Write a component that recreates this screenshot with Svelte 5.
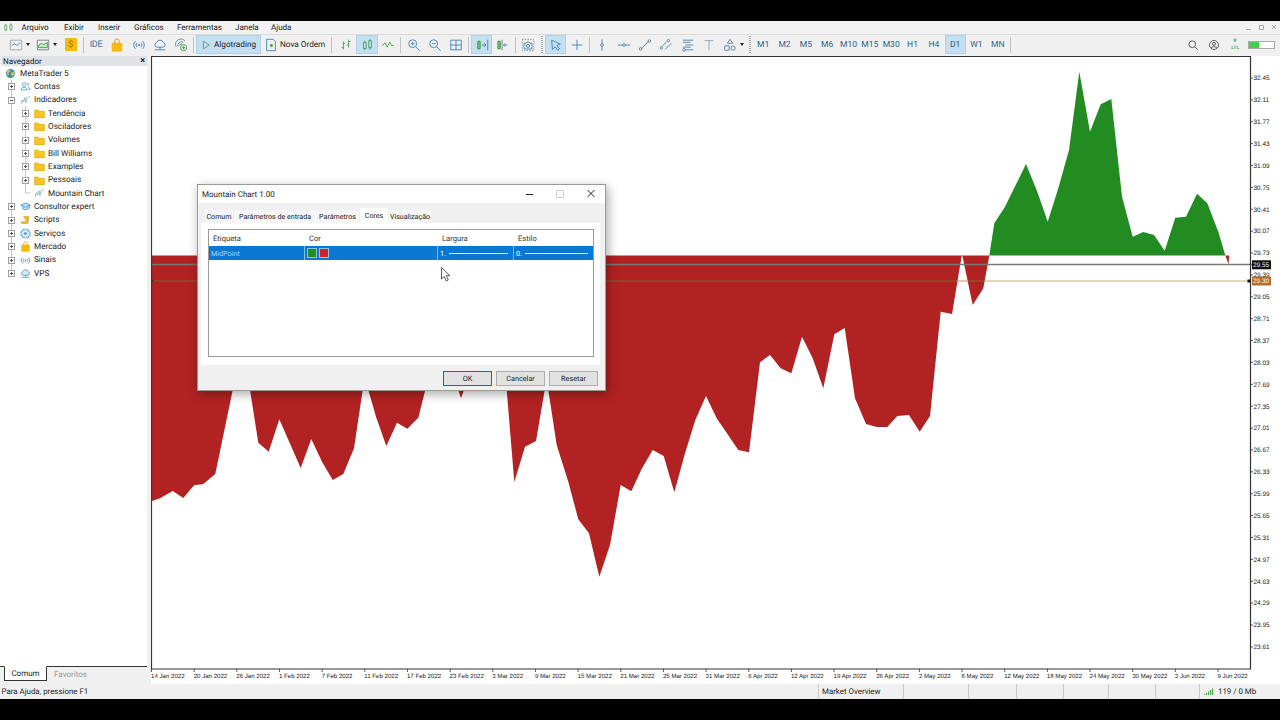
<script>
  const B = '#3d7fb5';
  const G = '#3f9d4a';
  const Y = '#f5b90f';

  // icon name -> list of paths on a 16x16 box
  const icons = {
    chartLine: [{ d: 'M1.5 2.5h13v11h-13z', s: '#9aa5ad' }, { d: 'M3 9l3-2.500 3 2 4-3.500', s: B }],
    chartArea: [{ d: 'M1.5 2.5h13v11h-13z', s: '#6f7a80' }, { d: 'M3 11V8l3-2 3 1.5 4-2.5V11z', s: G, f: '#c6e6c6' }],
    bag: [{ d: 'M2.5 6h11v9h-11z', f: Y, s: Y }, { d: 'M5.5 7V3.500a2.500 2.500 0 0 1 5 0V7', s: '#d69b00' }],
    signal: [{ d: 'M4 3.5a6 6 0 0 0 0 9M12 3.5a6 6 0 0 1 0 9M5.8 5.5a3.5 3.5 0 0 0 0 5M10.2 5.5a3.5 3.5 0 0 1 0 5', s: B }, { d: 'M7 7h2v2H7z', f: B }],
    cloud: [{ d: 'M4.5 10.5a2.7 2.7 0 0 1-.3-5.300 4 4 0 0 1 7.600 0 2.700 2.700 0 0 1-.3 5.300zM8 10.5V13M2 13.5h12', s: B }],
    ring: [{ d: 'M2.5 10a6 6 0 0 1 10-6.500M4.500 9.500a4 4 0 0 1 6-4.500M6.500 9a2 2 0 0 1 2.500-2', s: '#5b8a8c' }, { d: 'M14.5 11a3.5 3.5 0 1 1-7 0 3.500 3.500 0 0 1 7 0zM11 9v4M9 11h4', s: G }],
    play: [{ d: 'M4.5 3l8 5-8 5z', s: G }],
    order: [{ d: 'M3 1.5h7.500l2.500 2.500v10.500H3z', s: B }, { d: 'M7 7h3v3H7z', f: G }],
    bars: [{ d: 'M5 4v9M3 11h2M5 6h2M11 2v9M9 8h2M11 4h2', s: G }],
    candle: [{ d: 'M4 5h3v7H4zM5.5 3v2M5.5 12v2', s: G }, { d: 'M10 3h3v8h-3zM11.5 1.5V3M11.5 11v2.500', s: G }],
    lineChart: [{ d: 'M1.5 9l3-3.500 2.500 5 3-6 2 4h2.500', s: G }],
    zoomIn: [{ d: 'M11 6.5a4.5 4.5 0 1 1-9 0 4.500 4.500 0 0 1 9 0zM10 10l4.500 4.500M4.500 6.500h4M6.500 4.500v4', s: B }],
    zoomOut: [{ d: 'M11 6.5a4.5 4.5 0 1 1-9 0 4.500 4.500 0 0 1 9 0zM10 10l4.500 4.500M4.500 6.500h4', s: B }],
    grid: [{ d: 'M2 2.5h12v11H2zM8 2.5v11M2 8h12', s: B }],
    scrollEnd: [{ d: 'M3 4h3v8H3zM4.5 2.5v11', s: G, f: '#9ed09e' }, { d: 'M8 8h4M10.5 6l2 2-2 2', s: B }, { d: 'M14.5 2v12', s: '#777' }],
    shiftEnd: [{ d: 'M2 4h3v8H2zM3.5 2.5v11', s: G, f: '#9ed09e' }, { d: 'M13 8H9M10.5 6l-2 2 2 2', s: B }, { d: 'M7 2v12', s: '#777' }],
    camera: [{ d: 'M1.5 1.5h13M1.5 1.5v13h13v-13', s: '#888', dash: '1.5 1.5' }, { d: 'M3.5 6h2.5l1-1.500h2l1 1.500h2.500v6.500h-9z', s: B }, { d: 'M9.8 9a1.8 1.8 0 1 1-3.600 0 1.800 1.800 0 0 1 3.600 0z', s: B }],
    cursor: [{ d: 'M3 2.5l10 4.500-4 1.500 3 4-2 1.500-3-4-3 3z', s: B }],
    cross: [{ d: 'M8 2v12M2 8h12', s: B }],
    vline: [{ d: 'M8 1.5v13', s: B }, { d: 'M9.5 8a1.5 1.5 0 1 1-3 0 1.500 1.500 0 0 1 3 0z', s: B, f: '#fff' }],
    hline: [{ d: 'M1 8h14', s: B }, { d: 'M9.5 8a1.5 1.5 0 1 1-3 0 1.500 1.500 0 0 1 3 0z', s: B, f: '#fff' }],
    trend: [{ d: 'M4 12L12 4', s: B }, { d: 'M4.5 12.5a1.5 1.5 0 1 1-3 0 1.500 1.500 0 0 1 3 0zM14.500 3.500a1.500 1.500 0 1 1-3 0 1.500 1.500 0 0 1 3 0z', s: '#6a7b88' }],
    channel: [{ d: 'M3 10L9 4M7 13l7-7', s: B }, { d: 'M4 11.5a1.3 1.3 0 1 1-2.600 0 1.300 1.300 0 0 1 2.600 0zM12 3a1.300 1.300 0 1 1-2.600 0 1.300 1.300 0 0 1 2.600 0z', s: '#6a7b88' }],
    fibo: [{ d: 'M2 2.5h12M5 8h9M5 13.5h9', s: B }, { d: 'M2 5h9M2 10.5h9', s: '#6a7b88' }, { d: 'M5 13.5a1.5 1.5 0 1 1-3 0 1.500 1.500 0 0 1 3 0z', s: '#6a7b88' }],
    tool: [{ d: 'M3 3h10M8 3v11', s: '#7fa3bf' }],
    shapes: [{ d: 'M8 1.5l3 4.500H5zM2 9h5v5H2zM14 11.500a2.500 2.500 0 1 1-5 0 2.500 2.500 0 0 1 5 0z', s: '#5b7f94' }],
    search: [{ d: 'M11.5 7a4.5 4.5 0 1 1-9 0 4.500 4.500 0 0 1 9 0zM10.500 10.500l4 4', s: '#333' }],
    user: [{ d: 'M14 8A6 6 0 1 1 2 8a6 6 0 0 1 12 0z', s: '#333' }, { d: 'M10 6.5a2 2 0 1 1-4 0 2 2 0 0 1 4 0zM4.500 12c1-2.500 6-2.500 7 0', s: '#333' }],
    lvl: [{ d: 'M8 1l3 3-1.500 0V7h-3V4H5z', s: G, f: '#8fce8f' }],
    candleMenu: [{ d: 'M2.5 4.5h3v7h-3zM4 2.5v2M4 11.500v2M10 4h3v7h-3zM11.500 2v2M11.500 11v2', s: G }],
    globe: [{ d: 'M14.5 8a6.5 6.5 0 1 1-13 0 6.500 6.500 0 0 1 13 0z', f: '#2f8fd0' }, { d: 'M3 4l4-2 1 3-3 2 1 3-3 0zM9 7l4-2 1 4-3 3-2-2z', f: '#e9c21b' }, { d: 'M6 11l3 1-1 3-2-1z', f: '#49a84e' }],
    people: [{ d: 'M8.5 5a2.5 2.5 0 1 1-5 0 2.500 2.500 0 0 1 5 0zM1.500 13c0-5 9-5 9 0zM10 2.800a2.300 2.300 0 0 1 1 4.400M11 8.500c2 .3 3.500 1.800 3.500 4h-2.500', s: '#2f86c4' }],
    wave: [{ d: 'M1.5 13l2-6 1.500 3 2-6 1.500 7 2-8M12 2l2.500 1', s: '#5f9ea0' }],
    folder: [{ d: 'M1 3h5l1.500 2H15v9H1z', f: '#f7c625', s: '#d9a400' }],
    expert: [{ d: 'M1 6l7-3 7 3-7 3zM4 8v3.500c2 1.500 6 1.500 8 0V8', s: '#2f86c4', f: '#bfe0f5' }, { d: 'M14 6v5', s: '#2f86c4' }],
    script: [{ d: 'M5 2.5h8l-2 9.500H2.500c-1 0-1-2 .5-2h6', f: '#f2bd2a', s: '#c28e00' }],
    gear: [{ d: 'M8 1l1.5 2 2.500-.5.500 2.500 2.500 1-1 2.500 1 2.500-2.500 1-.5 2.500-2.500-.5L8 15l-1.500-1.500-2.500.5-.5-2.500-2.500-1 1-2.500-1-2.500 2.500-1 .5-2.500 2.500.5z', s: '#2f86c4', f: '#d6ecfa' }, { d: 'M6.5 5.5l4 2.500-4 2.500z', f: '#2f86c4' }],
    vps: [{ d: 'M4.5 10.5a2.7 2.7 0 0 1-.3-5.300 4 4 0 0 1 7.600 0 2.700 2.700 0 0 1-.3 5.300z', s: '#2f86c4', f: '#d6ecfa' }, { d: 'M8 10.5V13M2 13.5h12', s: '#2f86c4' }]
  };

  const menu = [
    ['Arquivo', 'm-arquivo'], ['Exibir', 'm-exibir'], ['Inserir', 'm-inserir'], ['Gráficos', 'm-graficos'],
    ['Ferramentas', 'm-ferr'], ['Janela', 'm-janela'], ['Ajuda', 'm-ajuda']
  ];

  const timeframes = ['M1', 'M2', 'M5', 'M6', 'M10', 'M15', 'M30', 'H1', 'H4', 'D1', 'W1', 'MN'];

  const tree = [
    { level: 0, icon: 'globe', label: 'MetaTrader 5' },
    { level: 1, icon: 'people', label: 'Contas', box: '+' },
    { level: 1, icon: 'wave', label: 'Indicadores', box: '-' },
    { level: 2, icon: 'folder', label: 'Tendência', box: '+' },
    { level: 2, icon: 'folder', label: 'Osciladores', box: '+' },
    { level: 2, icon: 'folder', label: 'Volumes', box: '+' },
    { level: 2, icon: 'folder', label: 'Bill Williams', box: '+' },
    { level: 2, icon: 'folder', label: 'Examples', box: '+' },
    { level: 2, icon: 'folder', label: 'Pessoais', box: '+' },
    { level: 2, icon: 'wave', label: 'Mountain Chart' },
    { level: 1, icon: 'expert', label: 'Consultor expert', box: '+' },
    { level: 1, icon: 'script', label: 'Scripts', box: '+' },
    { level: 1, icon: 'gear', label: 'Serviços', box: '+' },
    { level: 1, icon: 'bag', label: 'Mercado', box: '+' },
    { level: 1, icon: 'signal', label: 'Sinais', box: '+' },
    { level: 1, icon: 'vps', label: 'VPS', box: '+' }
  ];

  // traced from the chart, page coordinates
  const redArea = `152,255.5 152,501 160,498.3 172.7,491 183.3,498 194,485.3 203.3,484 215.3,474 232.7,390 241,372
    250,390 258.3,442.7 268.7,451.7 279.3,419.3 300.7,468 311.3,439 322,461.7 332.7,480 343.3,474 354,448.3
    362.7,390 365.5,370 368.3,390 376,416.7 386.3,446 397,422.7 407.3,428.7 418.3,417.7 425.3,390 440,380
    458.3,390 461,398.3 464,390 485,370 506.7,390 514.3,482 525,446.7 536,441 544.7,390 546.5,375 548.3,390
    556.7,445 568.3,481.7 578.3,519.3 589,533.3 599.3,576.7 610,545 620.7,485 631.3,491.3 642,468.3 652.7,450
    663.7,456 674.3,492.3 685,453.3 695.3,420 706,396 716.7,418.3 738.3,450 749,452.3 760,362.3 770,355 780.7,368.3
    791.3,373.3 802,336.7 812.7,358.3 823.3,388.3 834.3,334.3 844.7,328 855,398.3 866,424 876.7,427 887.3,427
    897.3,416 909,415 919.7,431.7 930,416 940.7,311.7 952,314 962,254 972.7,305 983.3,288.3 989.3,255.5`;

  const greenArea = `989.3,255.5 994.3,223.3 1005,206.7 1015.7,185 1026,164 1037.3,191.7 1047.7,221.7 1058.3,188.3
    1069,150 1079.3,71.7 1090,131.7 1100.7,104.3 1111.3,99 1122,196.7 1132.7,236.7 1143.3,232 1154,235 1164.7,250.7
    1175.3,217.7 1186,216.7 1197,193.7 1207.3,203.3 1218.3,231.7 1225.3,255.5`;

  const bidLine = [[152, 957.5, '#8a5a2c'], [957.5, 967.7, '#cfa77f'], [967.7, 984.6, '#8a5a2c'], [984.6, 1250, '#cfa77f']];

  const priceLabels = ['32.45', '32.11', '31.77', '31.43', '31.09', '30.75', '30.41', '30.07', '29.73', '29.39', '29.05', '28.71',
    '28.37', '28.03', '27.69', '27.35', '27.01', '26.67', '26.33', '25.99', '25.65', '25.31', '24.97', '24.63', '24.29', '23.95', '23.61'];
  const prices = priceLabels.map((label, i) => ({ label, y: 78 + i * 21.88 }));

  const dateLabels = ['14 Jan 2022', '20 Jan 2022', '26 Jan 2022', '1 Feb 2022', '7 Feb 2022', '11 Feb 2022', '17 Feb 2022', '23 Feb 2022',
    '3 Mar 2022', '9 Mar 2022', '15 Mar 2022', '21 Mar 2022', '25 Mar 2022', '31 Mar 2022', '6 Apr 2022', '12 Apr 2022', '19 Apr 2022',
    '26 Apr 2022', '2 May 2022', '6 May 2022', '12 May 2022', '18 May 2022', '24 May 2022', '30 May 2022', '3 Jun 2022', '9 Jun 2022'];
  const dates = dateLabels.map((label, i) => ({ label, x: 151 + i * 42.66 }));

  const statusCells = ['c1', 'c2', 'c3', 'c4', 'c5', 'c6'];
</script>

{#snippet icon(name, size = 14)}
  <svg class="ico" width={size} height={size} viewBox="0 0 16 16" fill="none">
    {#each icons[name] as p}
      <path d={p.d} stroke={p.s ?? 'none'} fill={p.f ?? 'none'} stroke-dasharray={p.dash} />
    {/each}
  </svg>
{/snippet}

{#snippet tool(name, active = false)}
  <span class="btn" class:active>{@render icon(name)}</span>
{/snippet}

{#snippet caret()}
  <span class="caret"></span>
{/snippet}

<div class="app">
  <div class="blackbar top"></div>

  <div class="menubar">
    <span class="menu-logo">{@render icon('candleMenu', 11)}</span>
    {#each menu as [label, cls]}
      <span class="menu-item {cls}">{label}</span>
    {/each}
    <svg class="winctl" width="30" height="7" viewBox="0 0 30 7" fill="none" stroke="#a8a8a8">
      <path d="M0 5.5h5M13.5 1.5h4v4h-4zM26 1l4 4M30 1l-4 4" />
    </svg>
  </div>

  <div class="toolbar">
    <span class="dd">{@render icon('chartLine')}{@render caret()}</span>
    <span class="dd">{@render icon('chartArea')}{@render caret()}</span>
    <span class="btn"><span class="coin">$</span></span>
    <span class="sep"></span>
    <span class="btn ide">IDE</span>
    {@render tool('bag')}
    {@render tool('signal')}
    {@render tool('cloud')}
    {@render tool('ring')}
    <span class="sep"></span>
    <span class="labelled algo">{@render icon('play', 12)}Algotrading</span>
    <span class="labelled order">{@render icon('order')}Nova Ordem</span>
    <span class="sep wide"></span>
    {@render tool('bars')}
    {@render tool('candle', true)}
    {@render tool('lineChart')}
    <span class="sep"></span>
    {@render tool('zoomIn')}
    {@render tool('zoomOut')}
    {@render tool('grid')}
    <span class="sep"></span>
    {@render tool('scrollEnd', true)}
    {@render tool('shiftEnd')}
    <span class="sep"></span>
    {@render tool('camera')}
    <span class="grip"></span>
    {@render tool('cursor', true)}
    {@render tool('cross')}
    <span class="sep"></span>
    {@render tool('vline')}
    {@render tool('hline')}
    {@render tool('trend')}
    {@render tool('channel')}
    {@render tool('fibo')}
    {@render tool('tool')}
    <span class="dd">{@render icon('shapes')}{@render caret()}</span>
    <span class="grip"></span>
    {#each timeframes as tf}
      <span class="btn tf" class:active={tf === 'D1'}>{tf}</span>
    {/each}
    <span class="sep"></span>
    <span class="spacer"></span>
    <span class="btn">{@render icon('search', 12)}</span>
    <span class="btn">{@render icon('user', 12)}</span>
    <span class="btn lvl">{@render icon('lvl', 8)}<span>LVL</span></span>
    <span class="meter"><span class="meter-fill"></span></span>
  </div>

  <div class="main">
    <aside class="navigator">
      <div class="nav-head"><span>Navegador</span><span class="nav-close">×</span></div>
      <div class="tree">
        <svg class="guides" width="40" height="210" viewBox="0 66 40 210">
          <path d="M11.5 80V273M25.5 106V193M11.5 86h4M11.5 99.5h4M25.5 193h5" stroke="#c4c4c4" fill="none" />
        </svg>
        {#each tree as row}
          <div class="row lvl{row.level}">
            {#if row.level > 0}
              <span class="slot">
                {#if row.box}
                  <svg width="7" height="7" viewBox="0 0 7 7" fill="none">
                    <rect x=".5" y=".5" width="6" height="6" fill="#fff" stroke="#a0a0a0" />
                    <path d={row.box === '+' ? 'M2 3.5h3M3.5 2v3' : 'M2 3.5h3'} stroke="#555" />
                  </svg>
                {/if}
              </span>
            {/if}
            <span class="slot">{@render icon(row.icon, 11)}</span>
            <span class="row-label">{row.label}</span>
          </div>
        {/each}
      </div>
      <div class="nav-tabs">
        <span class="nav-tab on">Comum</span>
        <span class="nav-tab">Favoritos</span>
      </div>
    </aside>

    <div class="chart">
      <svg class="plot" width="1129" height="628" viewBox="151 56 1129 628">
        <polygon points={redArea} fill="#b22222" />
        <polygon points={greenArea} fill="#228b22" />
        <polygon points="1225.3,255.5 1229,255.5 1228.7,264.5" fill="#b22222" />
        <line x1="152" y1="264.5" x2="1252" y2="264.5" stroke="#777" stroke-width="1.6" />
        {#each bidLine as [x1, x2, color]}
          <line {x1} {x2} y1="281" y2="281" stroke={color} stroke-width="1.2" />
        {/each}
        <path d="M151.5 57v612H1250.5V57" fill="none" stroke="#333" stroke-width="1.2" />
        <path d="M151 56.5H1251" fill="none" stroke="#333" stroke-width="1.2" />
        <path d="M152 281h2" stroke="#222" />
        {#each prices as p}
          <line x1="1250" x2="1253" y1={p.y} y2={p.y} stroke="#333" stroke-width=".8" />
          <text class="axis" x="1253.5" y={p.y + 2.3}>{p.label}</text>
        {/each}
        {#each dates as d}
          <line x1={d.x + .5} x2={d.x + .5} y1="669" y2="672" stroke="#333" stroke-width=".8" />
          <text class="axis date" x={d.x} y="677.5">{d.label}</text>
        {/each}
        <rect x="1252" y="260.3" width="19" height="9" fill="#111" />
        <text class="axis tag" x="1253" y="267">29.55</text>
        <rect x="1252" y="276.5" width="19" height="9" fill="#b26f2c" />
        <text class="axis tag" x="1253" y="283.2">29.30</text>
        <rect x="1247.5" y="279.5" width="3" height="3" fill="#111" />
      </svg>
    </div>
  </div>

  <div class="statusbar">
    <span class="status-help">Para Ajuda, pressione F1</span>
    <span class="cell market">Market Overview</span>
    {#each statusCells as c}
      <span class="cell {c}"></span>
    {/each}
    <span class="cell conn">
      <svg width="10" height="8" viewBox="0 0 10 8">
        <path d="M.5 7V6M2.5 7V5M4.5 7V3.5M6.5 7V2M8.5 7V.5" stroke="#4da64d" stroke-width="1.2" />
      </svg>
      119 / 0 Mb
    </span>
  </div>

  <div class="blackbar bottom"></div>

  <section class="dialog">
    <header class="dlg-title">
      <span>Mountain Chart 1.00</span>
      <svg class="dlg-ctl" width="72" height="10" viewBox="0 0 72 10" fill="none">
        <path d="M0 5.5h7" stroke="#222" />
        <path d="M30.5 1.5h7v7h-7z" stroke="#ccc" />
        <path d="M61.5 1l7 7M68.5 1l-7 7" stroke="#222" />
      </svg>
    </header>
    <div class="dlg-tabs">
      <span class="tab t1">Comum</span>
      <span class="tab t2">Parâmetros de entrada</span>
      <span class="tab t3">Parâmetros</span>
      <span class="tab t4 on">Cores</span>
      <span class="tab t5">Visualização</span>
    </div>
    <div class="dlg-panel">
      <div class="list">
        <div class="list-row list-head">
          <span>Etiqueta</span><span>Cor</span><span>Largura</span><span>Estilo</span>
        </div>
        <div class="list-row selected">
          <span class="midpoint">MidPoint</span>
          <span class="swatches"><i class="sw green"></i><i class="sw red"></i></span>
          <span class="linecell">1.<i class="stroke"></i></span>
          <span class="linecell">0.<i class="stroke"></i></span>
        </div>
      </div>
    </div>
    <footer class="dlg-foot">
      <span class="push ok">OK</span>
      <span class="push">Cancelar</span>
      <span class="push">Resetar</span>
    </footer>
  </section>

  <svg class="pointer" width="10" height="15" viewBox="0 0 10 15">
    <path d="M.5.5v11.500l2.800-2.500 2 4.500 2-1-2-4.300h3.700z" fill="#fff" stroke="#333" stroke-width=".8" />
  </svg>
</div>

<style>
  :global(body) {
    margin: 0;
    background: #000;
  }

  .app {
    position: relative;
    width: 1280px;
    height: 720px;
    display: flex;
    flex-direction: column;
    background: #f0f0f0;
    font-family: Roboto, "Noto Sans", sans-serif;
    font-size: 8px;
    color: #222;
    overflow: hidden;
    white-space: nowrap;
    text-rendering: geometricPrecision;
  }

  .blackbar {
    background: #000;
    flex: none;
  }
  .blackbar.top { height: 21px; }
  .blackbar.bottom { height: 21px; }

  .menubar {
    height: 13px;
    flex: none;
    display: flex;
    align-items: center;
    padding-left: 3px;
    background: #f2f2f2;
  }
  .menu-logo { width: 18.5px; display: flex; }
  .menu-item { flex: none; }
  .m-arquivo { width: 42.5px; }
  .m-exibir { width: 34px; }
  .m-inserir { width: 36px; }
  .m-graficos { width: 43px; }
  .m-ferr { width: 58px; }
  .m-janela { width: 36px; }
  .winctl {
    margin-left: auto;
    margin-right: 4px;
  }

  .toolbar {
    height: 22px;
    flex: none;
    display: flex;
    align-items: center;
    padding: 0 0 2px 6px;
    border-top: 1px solid #dcdcdc;
    box-sizing: border-box;
    background: #f0f0f0;
  }
  .btn {
    width: 21.33px;
    height: 19px;
    flex: none;
    display: flex;
    align-items: center;
    justify-content: center;
    box-sizing: border-box;
  }
  .btn.active {
    background: #c4def2;
    border: 1px solid #b0d3ec;
  }
  .ico { display: block; flex: none; }
  .dd {
    width: 27px;
    flex: none;
    display: flex;
    align-items: center;
    padding-left: 3px;
    gap: 3px;
    box-sizing: border-box;
  }
  .caret {
    width: 0;
    height: 0;
    border-left: 2.5px solid transparent;
    border-right: 2.5px solid transparent;
    border-top: 3px solid #222;
  }
  .coin {
    width: 12px;
    height: 13px;
    background: #f5b90f;
    color: #a86f00;
    border-radius: 1px;
    display: flex;
    align-items: center;
    justify-content: center;
    font-size: 9px;
  }
  .ide {
    color: #2f74ad;
    font-size: 9px;
    letter-spacing: -.3px;
  }
  .sep {
    width: 1px;
    height: 16px;
    flex: none;
    margin: 0 1.5px;
    background: #c2c2c2;
  }
  .sep.wide { margin: 0 2.5px; }
  .grip {
    width: 2px;
    height: 17px;
    flex: none;
    margin: 0 2px;
    border-left: 1px dotted #aaa;
    border-right: 1px dotted #aaa;
    box-sizing: border-box;
  }
  .labelled {
    height: 19px;
    flex: none;
    display: flex;
    align-items: center;
    box-sizing: border-box;
    font-size: 8.2px;
  }
  .algo {
    width: 65px;
    padding-left: 3px;
    gap: 2px;
    background: #c4def2;
    border: 1px solid #b0d3ec;
  }
  .order {
    width: 66px;
    margin-left: 2px;
    padding-left: 1px;
    gap: 2px;
  }
  .tf {
    color: #2c5f8d;
    font-size: 8.5px;
  }
  .spacer { flex: 1; }
  .lvl {
    flex-direction: column;
    color: #3f9d4a;
    font-size: 5px;
    line-height: 5px;
  }
  .meter {
    width: 27px;
    height: 8px;
    flex: none;
    margin-right: 5px;
    margin-left: 2px;
    border: 1px solid #aaa;
    background: #fff;
    display: flex;
    box-sizing: border-box;
  }
  .meter-fill {
    width: 10px;
    background: #3fd14a;
  }

  .main {
    height: 628px;
    flex: none;
    display: flex;
  }

  .navigator {
    width: 151px;
    flex: none;
    display: flex;
    flex-direction: column;
    box-sizing: border-box;
    padding: 0 4px 3px 2px;
  }
  .nav-head {
    height: 10px;
    flex: none;
    display: flex;
    justify-content: space-between;
    align-items: center;
    padding: 0 2px 0 1px;
    background: #dfe3e8;
  }
  .nav-close {
    font-weight: 700;
    font-size: 9px;
  }
  .tree {
    flex: 1;
    position: relative;
    background: #fff;
    margin-left: -2px;
    padding-top: 1px;
  }
  .guides {
    position: absolute;
    left: 0;
    top: 0;
  }
  .row {
    position: relative;
    height: 13.33px;
    display: flex;
    align-items: center;
    font-size: 8.2px;
  }
  .lvl0 { padding-left: 3px; }
  .lvl1 { padding-left: 4px; }
  .lvl2 { padding-left: 18px; }
  .slot {
    width: 14px;
    flex: none;
    display: flex;
    justify-content: center;
    align-items: center;
  }
  .row-label { margin-left: 2px; }
  .lvl0 .row-label { margin-left: 3px; }
  .nav-tabs {
    height: 14px;
    flex: none;
    display: flex;
    margin-left: -2px;
    padding-left: 4px;
    border-top: 1px solid #333;
    background: #f0f0f0;
  }
  .nav-tab {
    width: 43px;
    display: flex;
    align-items: center;
    justify-content: center;
    color: #9a9a9a;
    margin-left: 2px;
  }
  .nav-tab.on {
    margin: -1px 0 0;
    background: #fff;
    color: #222;
    border: 1px solid #333;
    border-top-color: #fff;
    height: 15px;
    box-sizing: border-box;
  }

  .chart {
    flex: 1;
    position: relative;
    background: #fff;
  }
  .plot { display: block; }
  .axis {
    font-family: "Liberation Sans", sans-serif;
    font-size: 6.4px;
    fill: #222;
  }
  .axis.date { font-size: 6.1px; }
  .axis.tag { fill: #f2f2f2; }

  .statusbar {
    height: 15px;
    flex: none;
    display: flex;
    align-items: center;
    background: #f0f0f0;
    font-size: 7.9px;
  }
  .status-help {
    width: 818px;
    padding-left: 1.5px;
    box-sizing: border-box;
  }
  .cell {
    height: 100%;
    flex: none;
    display: flex;
    align-items: center;
    gap: 4px;
    border-left: 1px solid #c8c8c8;
    box-sizing: border-box;
  }
  .market { width: 85px; padding-left: 3px; }
  .c1 { width: 65px; }
  .c2 { width: 48px; }
  .c3 { width: 47px; }
  .c4 { width: 45px; }
  .c5 { width: 47px; }
  .c6 { width: 44px; }
  .conn { padding-left: 4px; }

  .dialog {
    position: absolute;
    left: 197px;
    top: 184px;
    width: 409px;
    height: 207px;
    display: flex;
    flex-direction: column;
    background: #f0f0f0;
    border: 1px solid #9a9a9a;
    box-sizing: border-box;
    box-shadow: 2px 3px 10px rgba(0, 0, 0, .35);
  }
  .dlg-title {
    height: 18px;
    flex: none;
    display: flex;
    align-items: center;
    justify-content: space-between;
    padding: 0 7.5px 0 4px;
    background: #fff;
    font-size: 8px;
  }
  .dlg-tabs {
    height: 20px;
    flex: none;
    display: flex;
    align-items: flex-end;
    padding-left: 7px;
    box-sizing: border-box;
  }
  .tab {
    height: 13px;
    flex: none;
    display: flex;
    align-items: center;
    justify-content: center;
    box-sizing: border-box;
    font-size: 7.1px;
    background: #f5f5f5;
  }
  .tab.on {
    height: 15px;
    background: #fff;
  }
  .t1 { width: 28px; }
  .t2 { width: 82px; margin-left: 1px; }
  .t3 { width: 43px; }
  .t4 { width: 28px; margin-left: 1px; }
  .t5 { width: 44px; }
  .dlg-panel {
    height: 142px;
    flex: none;
    margin: 0 5px 0 3px;
    padding: 6px 6px 8px 7px;
    background: #fff;
    box-sizing: border-box;
    display: flex;
  }
  .list {
    flex: 1;
    border: 1px solid #9a9a9a;
    box-sizing: border-box;
  }
  .list-row {
    display: grid;
    grid-template-columns: 96px 133px 76px 79px;
    align-items: center;
  }
  .list-head {
    height: 16px;
    color: #333;
    font-size: 7.6px;
  }
  .list-head span { padding-left: 4px; }
  .selected {
    height: 14px;
    background: #0a78d2;
    color: #fff;
    font-size: 7.2px;
  }
  .selected > span {
    height: 100%;
    display: flex;
    align-items: center;
    box-sizing: border-box;
    border-right: 1px solid #7cc0ef;
  }
  .selected > span:last-child { border-right: none; }
  .midpoint {
    padding-left: 2px;
    color: #9fd8ff;
  }
  .swatches {
    padding-left: 2px;
    gap: 2px;
  }
  .sw {
    width: 8px;
    height: 8px;
    border: 1px solid #8fc4e8;
  }
  .sw.green { background: #228b22; }
  .sw.red { background: #c7252c; }
  .linecell { padding: 0 5px 0 2px; gap: 3px; }
  .stroke {
    flex: 1;
    height: 1px;
    background: #e8f4fc;
  }
  .dlg-foot {
    flex: 1;
    display: flex;
    justify-content: flex-end;
    align-items: center;
    gap: 4px;
    padding: 2px 7px 0 0;
    font-size: 7.3px;
  }
  .push {
    width: 49px;
    height: 15px;
    display: flex;
    align-items: center;
    justify-content: center;
    box-sizing: border-box;
    background: #e1e1e1;
    border: 1px solid #adadad;
  }
  .push.ok { border-color: #0a6db5; }

  .pointer {
    position: absolute;
    left: 441px;
    top: 267px;
  }
</style>
